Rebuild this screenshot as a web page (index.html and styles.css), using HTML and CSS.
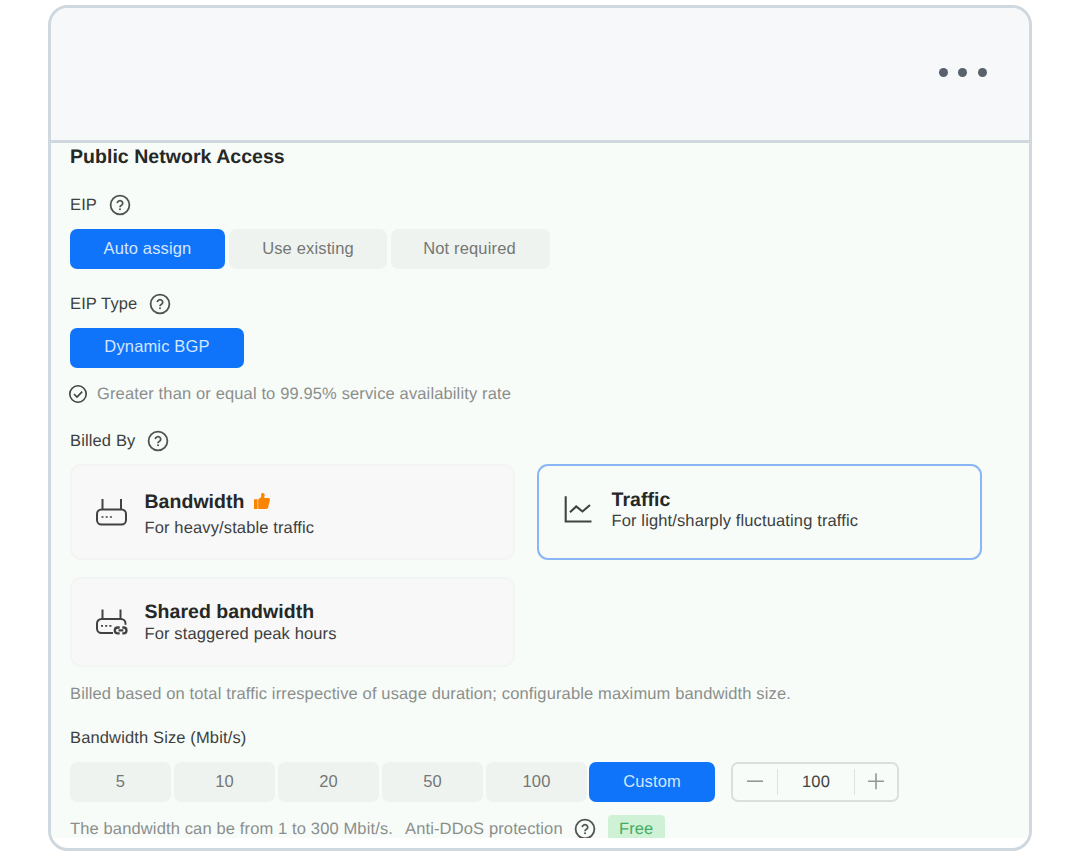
FILE: index.html
```html
<!DOCTYPE html>
<html lang="en">
<head>
<meta charset="utf-8">
<title>Public Network Access</title>
<link rel="stylesheet" href="styles.css">
</head>
<body>
<svg class="defs" width="0" height="0">
  <symbol id="help" viewBox="0 0 22 22"><g fill="none" stroke="currentColor" stroke-width="1.8"><circle cx="11" cy="11" r="9.4"/><path d="M8.300 9.100a2.700 2.500 0 1 1 4.200 2.200c-.9.5-1.500 1-1.500 2"/></g><circle cx="11" cy="15.300" r="1" fill="currentColor"/></symbol>
</svg>
<main class="window">
  <header class="bar"><i class="dot"></i><i class="dot"></i><i class="dot"></i></header>
  <section class="panel">
    <h1 class="title">Public Network Access</h1>
    <div class="label eip"><span>EIP</span><svg class="help"><use href="#help"/></svg></div>
    <div class="group">
      <button class="opt on auto">Auto assign</button>
      <button class="opt use">Use existing</button>
      <button class="opt not">Not required</button>
    </div>
    <div class="label type"><span>EIP Type</span><svg class="help"><use href="#help"/></svg></div>
    <div class="group"><button class="opt on bgp">Dynamic BGP</button></div>
    <div class="note avail"><svg class="check" viewBox="0 0 20 20" fill="none" stroke="currentColor" stroke-width="1.6"><circle cx="10" cy="10" r="8.2"/><path d="M6 10l3 3 5.200-5.400"/></svg><span>Greater than or equal to 99.95% service availability rate</span></div>
    <div class="label billed"><span>Billed By</span><svg class="help"><use href="#help"/></svg></div>
    <div class="cards">
      <article class="card">
        <svg class="icon" viewBox="0 0 34 34" fill="none" stroke="currentColor" stroke-width="2"><path d="M7.500 4v11M26 4v11"/><rect x="2" y="14.500" width="29" height="15" rx="4.500"/><path d="M6.500 22h2m2.200 0h2m2.200 0h2" stroke-width="1.700"/></svg>
        <div class="copy"><h2 class="name wide"><span>Bandwidth</span><svg class="thumb" viewBox="0 0 16 16" fill="currentColor"><path d="M0 6.300h3.600V16H0zM4.200 6.600 7.200 4V1.400C7.200.5 7.800 0 8.600 0c1.500 0 2.100 1 2 2.200L10.200 5h4c1.200 0 2 .9 1.700 2.100l-1.700 7.200c-.3 1-1 1.700-2 1.700h-8z"/></svg></h2><p class="desc">For heavy/stable traffic</p></div>
      </article>
      <article class="card active">
        <svg class="icon" viewBox="0 0 34 34" fill="none" stroke="currentColor" stroke-width="2.100"><path d="M3.700 3.200v25.300h25.800"/><path d="M8 19.200l6.200-5.700 6.300 5 7.500-6.500"/></svg>
        <div class="copy"><h2 class="name">Traffic</h2><p class="desc">For light/sharply fluctuating traffic</p></div>
      </article>
      <article class="card shared">
        <svg class="icon" viewBox="0 0 34 34" fill="none" stroke="currentColor" stroke-width="2"><path d="M7.500 4.500v9.500M25.500 4.500v9.500"/><path d="M18 28H6.500A4.500 4.500 0 0 1 2 23.500v-5A4.500 4.500 0 0 1 6.500 14h19.500a4.500 4.500 0 0 1 4.500 4.500v1.300"/><path d="M6 20.900h2m2.200 0h2m2.200 0h2" stroke-width="1.700"/><path d="M24.700 22.500h-2a2.900 2.900 0 0 0 0 5.800h2M27.300 22.500h1.300a2.900 2.900 0 0 1 0 5.800h-1.300M23.500 25.400h4.800" stroke-width="2.300"/></svg>
        <div class="copy"><h2 class="name">Shared bandwidth</h2><p class="desc">For staggered peak hours</p></div>
      </article>
    </div>
    <div class="note based">Billed based on total traffic irrespective of usage duration; configurable maximum bandwidth size.</div>
    <div class="label size">Bandwidth Size (Mbit/s)</div>
    <div class="group sizes">
      <button class="opt num">5</button><button class="opt num">10</button><button class="opt num">20</button><button class="opt num">50</button><button class="opt num">100</button><button class="opt on custom">Custom</button>
      <div class="stepper">
        <svg class="step" viewBox="0 0 18 18"><path d="M1 8.200h16" stroke="currentColor" stroke-width="1.600"/></svg>
        <span class="value">100</span>
        <svg class="step" viewBox="0 0 18 18"><path d="M1 8.200h16M9 .2v16" stroke="currentColor" stroke-width="1.600"/></svg>
      </div>
    </div>
    <div class="note range"><span>The bandwidth can be from 1 to 300 Mbit/s.</span><span class="ddos">Anti-DDoS protection</span><svg class="help"><use href="#help"/></svg><span class="free">Free</span></div>
  </section>
</main>
</body>
</html>
```
FILE: styles.css
```css
* { box-sizing: border-box; }
body { margin: 0; padding: 5px 48px 0; background: #fff; font: 16.5px "Liberation Sans", Arial, sans-serif; letter-spacing: .135px; text-rendering: geometricPrecision; color: #3d403e; white-space: nowrap; }
.defs { display: block; height: 0; }
.window { width: 984px; height: 846px; border: 3px solid #cfd8df; border-radius: 20px; overflow: hidden; background: #fff; }
.bar { height: 135px; border-bottom: 3px solid #cfd8df; background: #f6f8fa; display: flex; justify-content: flex-end; gap: 10.3px; padding: 60px 42px 0 0; }
.dot { width: 9.300px; height: 9.300px; border-radius: 50%; background: #59616b; }
.panel { height: 695px; background: #f7fcf9; padding-left: 19px; overflow: hidden; display: flex; flex-direction: column; align-items: flex-start; }
.panel > * { flex-shrink: 0; }
.title, .name, .desc { margin: 0; letter-spacing: .04px; }
.title { font-size: 19.500px; height: 28px; line-height: 29px; color: #252826; }
.label, .note { display: flex; align-items: center; }
.label .help { margin-left: 12px; }
.help { width: 22px; height: 22px; color: #505351; flex: none; }
.eip { height: 34px; margin: 17px 0 7px; }
.type { height: 34px; margin: 18px 0 7px; }
.group { display: flex; height: 40px; }
.opt { border: 0; border-radius: 7px; background: #eff3f0; color: #747775; font: inherit; letter-spacing: .15px; padding: 0 0 2px; height: 40px; text-align: center; }
.on { background: #1074fb; color: #d4e6ff; }
.auto { width: 155px; margin-right: 4px; }
.use { width: 158px; margin-right: 4px; }
.not { width: 159px; padding-right: 2px; }
.bgp { width: 174px; padding-bottom: 4px; }
.note { color: #8b8e8c; }
.avail { height: 24px; margin-top: 14px; }
.check { width: 20px; height: 20px; margin: -1px 9px 0 -2px; color: #3e413f; }
.billed { height: 30px; margin: 20px 0 8px; }
.cards { display: grid; grid-template-columns: 445px 445px; grid-template-rows: 96px 90px; gap: 17px 22px; }
.card { border: 2px solid #f3f4f4; border-radius: 11px; background: #f8f8f8; display: flex; padding: 23px 0 0 23px; }
.active { border-color: #8ab6f5; background: #f7fcf9; padding-top: 21px; }
.shared { padding-top: 20px; }
.icon { width: 34px; height: 34px; margin-right: 15.500px; margin-top: 6px; color: #414342; }
.name { font-size: 19.500px; line-height: 26px; height: 23px; color: #252826; display: flex; }
.active .name { line-height: 26px; height: 23px; }
.shared .name { line-height: 26px; height: 24px; }
.wide { height: 28px; }
.thumb { width: 16px; height: 16px; margin: 4px 0 0 9px; color: #fb8500; }
.desc { font-size: 16.500px; line-height: 22px; letter-spacing: .13px; }
.based { height: 24px; margin-top: 15px; }
.size { height: 24px; margin: 20px 0 12px; }
.num { width: 101px; margin-right: 3px; }
.custom { width: 126px; margin-left: -1px; }
.stepper { width: 168px; height: 40px; margin-left: 16px; border: 2px solid #dcdfdd; border-radius: 7px; display: flex; align-items: center; color: #949795; padding: 0 12px 0 13px; }
.step { width: 18px; height: 18px; }
.value { flex: 1; height: 26px; line-height: 27px; text-align: center; margin: 0 12px 0 13px; border: solid #dfe2e0; border-width: 0 1.500px; color: #414442; }
.range { height: 34px; margin-top: 10px; }
.ddos { margin-left: 12px; }
.range .help { margin-left: 11px; }
.free { margin-left: 12px; width: 57px; height: 28px; line-height: 28px; text-align: center; border-radius: 4px; background: #cff2d6; color: #43ab63; }
```
